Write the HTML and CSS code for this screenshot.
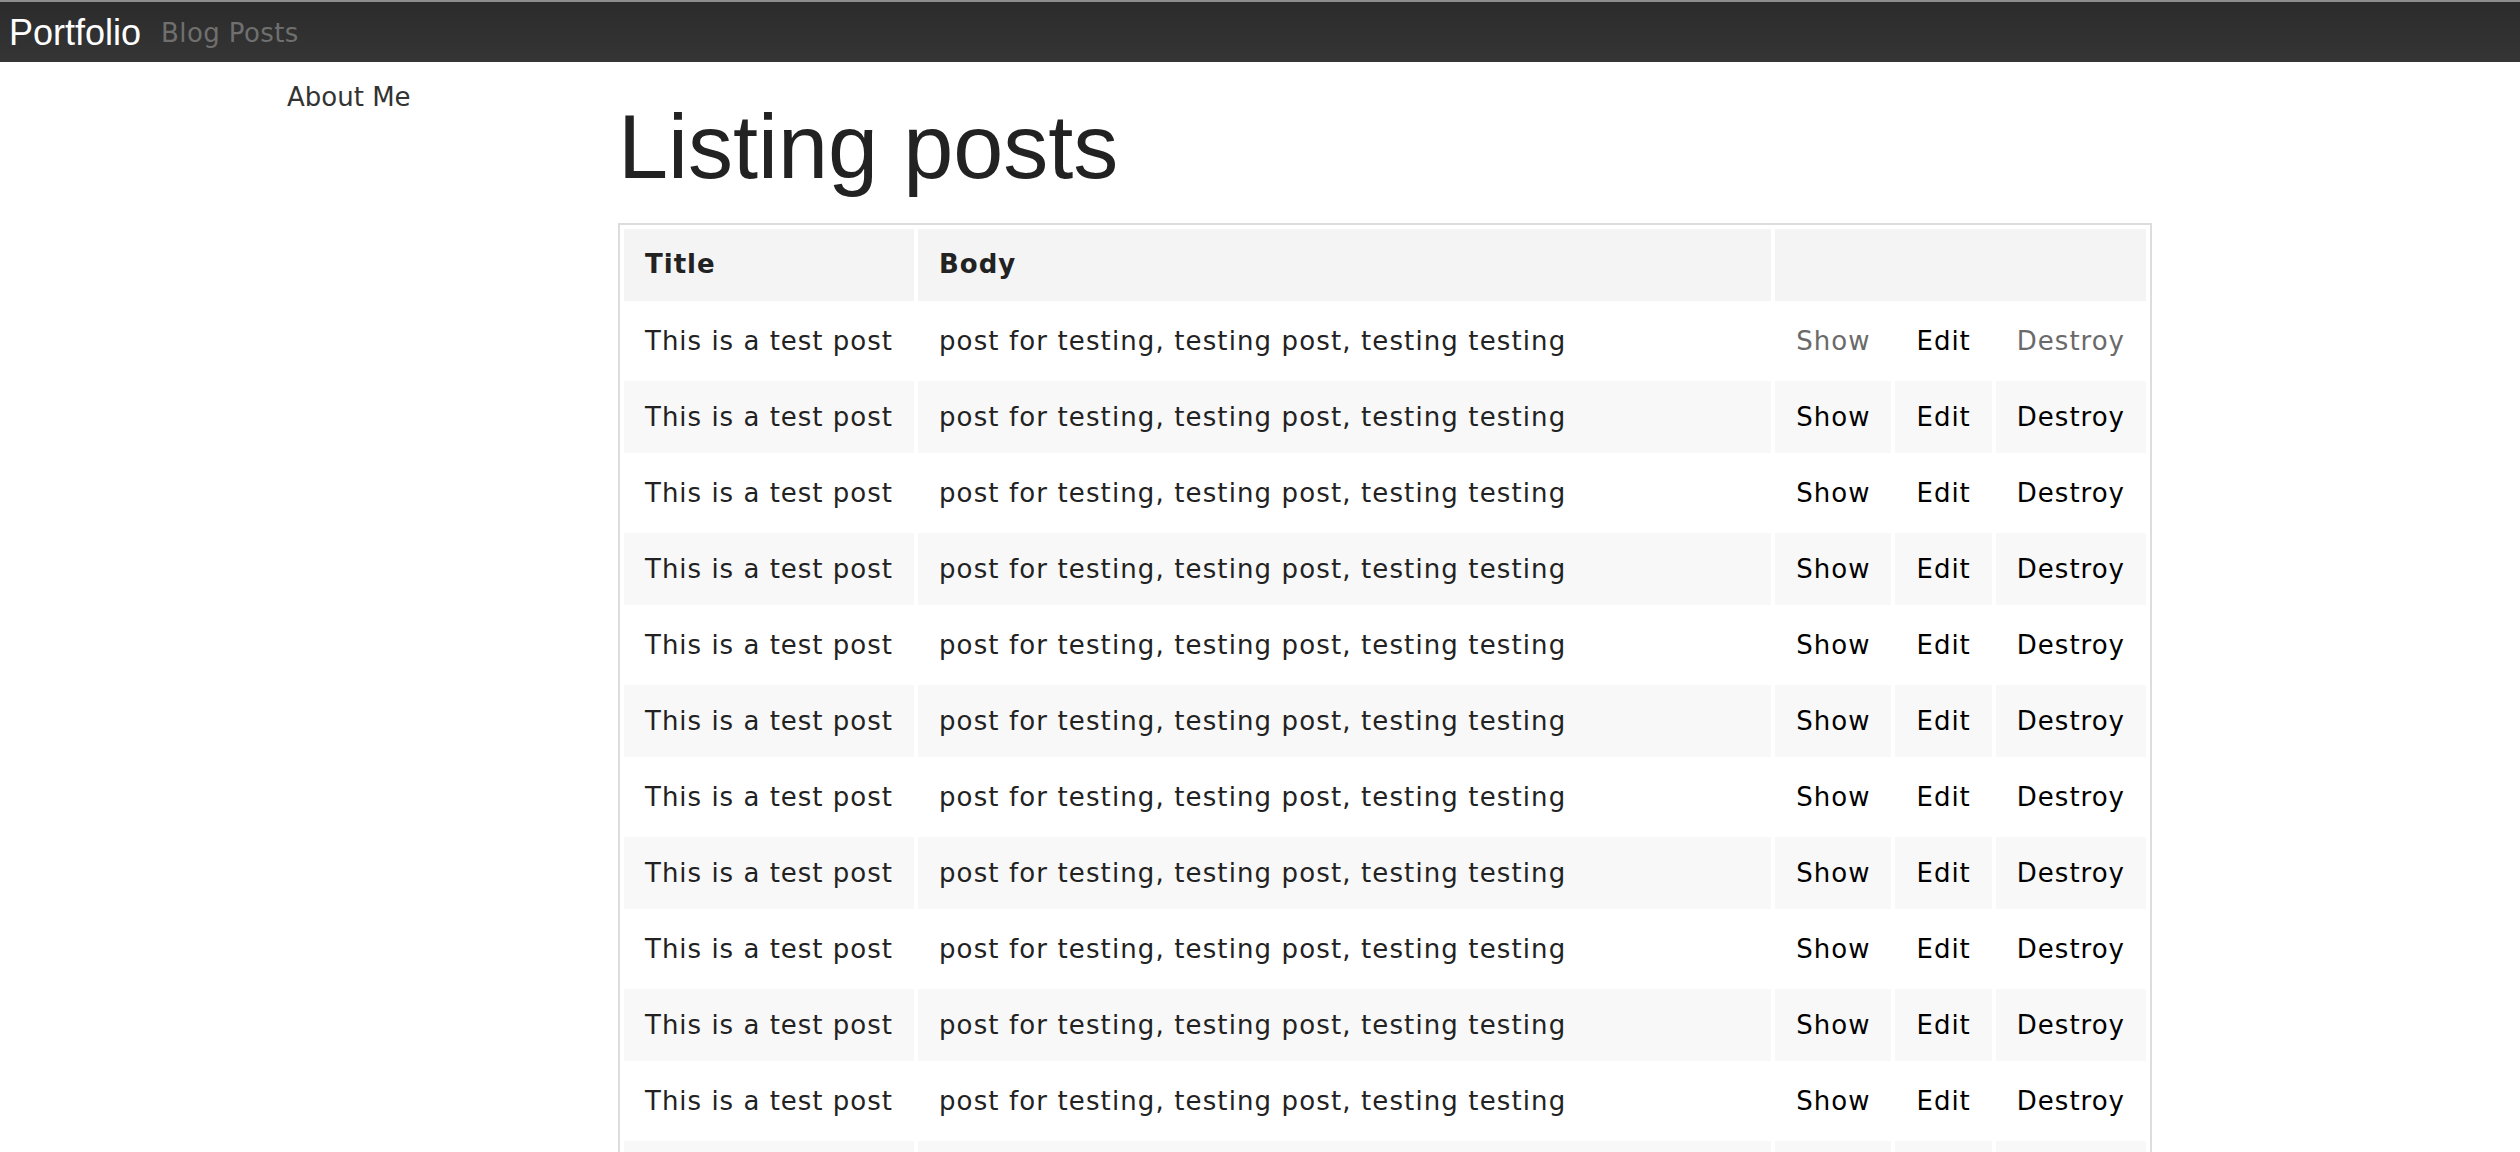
FILE: index.html
```html
<!DOCTYPE html>
<html>
<head>
<meta charset="utf-8">
<title>Listing posts</title>
<link rel="stylesheet" href="styles.css">
</head>
<body>
<header class="navbar">
  <a class="brand" href="#">Portfolio</a>
  <a class="nav-link" href="#">Blog Posts</a>
</header>
<div class="page">
  <aside class="sidebar">
    <a class="side-link" href="#">About Me</a>
  </aside>
  <main class="main">
    <h1 class="heading">Listing posts</h1>
    <table class="posts">
      <thead>
        <tr>
          <th class="fit">Title</th>
          <th>Body</th>
          <th colspan="3"></th>
        </tr>
      </thead>
      <tbody>
        <tr><td class="fit">This is a test post</td><td class="body">post for testing, testing post, testing testing</td><td class="fit"><a class="link visited" href="#">Show</a></td><td class="fit"><a class="link" href="#">Edit</a></td><td class="fit"><a class="link visited" href="#">Destroy</a></td></tr>
        <tr><td class="fit">This is a test post</td><td class="body">post for testing, testing post, testing testing</td><td class="fit"><a class="link" href="#">Show</a></td><td class="fit"><a class="link" href="#">Edit</a></td><td class="fit"><a class="link" href="#">Destroy</a></td></tr>
        <tr><td class="fit">This is a test post</td><td class="body">post for testing, testing post, testing testing</td><td class="fit"><a class="link" href="#">Show</a></td><td class="fit"><a class="link" href="#">Edit</a></td><td class="fit"><a class="link" href="#">Destroy</a></td></tr>
        <tr><td class="fit">This is a test post</td><td class="body">post for testing, testing post, testing testing</td><td class="fit"><a class="link" href="#">Show</a></td><td class="fit"><a class="link" href="#">Edit</a></td><td class="fit"><a class="link" href="#">Destroy</a></td></tr>
        <tr><td class="fit">This is a test post</td><td class="body">post for testing, testing post, testing testing</td><td class="fit"><a class="link" href="#">Show</a></td><td class="fit"><a class="link" href="#">Edit</a></td><td class="fit"><a class="link" href="#">Destroy</a></td></tr>
        <tr><td class="fit">This is a test post</td><td class="body">post for testing, testing post, testing testing</td><td class="fit"><a class="link" href="#">Show</a></td><td class="fit"><a class="link" href="#">Edit</a></td><td class="fit"><a class="link" href="#">Destroy</a></td></tr>
        <tr><td class="fit">This is a test post</td><td class="body">post for testing, testing post, testing testing</td><td class="fit"><a class="link" href="#">Show</a></td><td class="fit"><a class="link" href="#">Edit</a></td><td class="fit"><a class="link" href="#">Destroy</a></td></tr>
        <tr><td class="fit">This is a test post</td><td class="body">post for testing, testing post, testing testing</td><td class="fit"><a class="link" href="#">Show</a></td><td class="fit"><a class="link" href="#">Edit</a></td><td class="fit"><a class="link" href="#">Destroy</a></td></tr>
        <tr><td class="fit">This is a test post</td><td class="body">post for testing, testing post, testing testing</td><td class="fit"><a class="link" href="#">Show</a></td><td class="fit"><a class="link" href="#">Edit</a></td><td class="fit"><a class="link" href="#">Destroy</a></td></tr>
        <tr><td class="fit">This is a test post</td><td class="body">post for testing, testing post, testing testing</td><td class="fit"><a class="link" href="#">Show</a></td><td class="fit"><a class="link" href="#">Edit</a></td><td class="fit"><a class="link" href="#">Destroy</a></td></tr>
        <tr><td class="fit">This is a test post</td><td class="body">post for testing, testing post, testing testing</td><td class="fit"><a class="link" href="#">Show</a></td><td class="fit"><a class="link" href="#">Edit</a></td><td class="fit"><a class="link" href="#">Destroy</a></td></tr>
        <tr><td class="fit">This is a test post</td><td class="body">post for testing, testing post, testing testing</td><td class="fit"><a class="link" href="#">Show</a></td><td class="fit"><a class="link" href="#">Edit</a></td><td class="fit"><a class="link" href="#">Destroy</a></td></tr>
        <tr><td class="fit">This is a test post</td><td class="body">post for testing, testing post, testing testing</td><td class="fit"><a class="link" href="#">Show</a></td><td class="fit"><a class="link" href="#">Edit</a></td><td class="fit"><a class="link" href="#">Destroy</a></td></tr>
      </tbody>
    </table>
  </main>
</div>
</body>
</html>
```
FILE: styles.css
```css
html, body {
  margin: 0;
  padding: 0;
  background: #fff;
}

body {
  font-family: "DejaVu Sans", Verdana, sans-serif;
  font-size: 26px;
  color: #222;
}

a {
  text-decoration: none;
}

.navbar {
  height: 62px;
  box-sizing: border-box;
  display: flex;
  align-items: flex-start;
  gap: 20px;
  padding: 10px 0 0 9px;
  background: linear-gradient(to bottom, #2b2b2b, #353535);
  border-top: 2px solid #8d8d8d;
}

.brand {
  font-family: "Liberation Sans", Arial, sans-serif;
  font-size: 36px;
  color: #fff;
}

.nav-link {
  font-family: "DejaVu Sans", Verdana, sans-serif;
  font-size: 26px;
  letter-spacing: 0.4px;
  color: #6f6f6f;
  margin-top: 6px;
}

.page {
  display: flex;
  align-items: flex-start;
}

.sidebar {
  width: 618px;
  flex: none;
  box-sizing: border-box;
  padding: 20px 0 0 287px;
}

.side-link {
  color: #333;
  font-size: 26px;
  white-space: nowrap;
}

.main {
  width: 1534px;
  flex: none;
}

.heading {
  font-family: "Liberation Sans", Arial, sans-serif;
  font-size: 90px;
  font-weight: normal;
  color: #222;
  line-height: normal;
  margin: 34px 0 24px;
}

.posts {
  width: 100%;
  border: 2px solid #dddddd;
  border-collapse: separate;
  border-spacing: 4px;
  font-size: 26px;
  letter-spacing: 1px;
}

.posts th,
.posts td {
  padding: 21px 21px;
  line-height: 30px;
  text-align: left;
  vertical-align: middle;
  white-space: nowrap;
}

.posts th {
  background: #f4f4f4;
  font-weight: bold;
  color: #222;
  padding-top: 20px;
  padding-bottom: 22px;
}

.posts td {
  color: #222;
}

.posts td.body {
  letter-spacing: 1.12px;
}

.posts tbody tr:nth-child(even) td {
  background: #f8f8f8;
}

.posts .fit {
  width: 1%;
}

.link {
  color: #000;
}

.link.visited {
  color: #6a6a6a;
}
```
